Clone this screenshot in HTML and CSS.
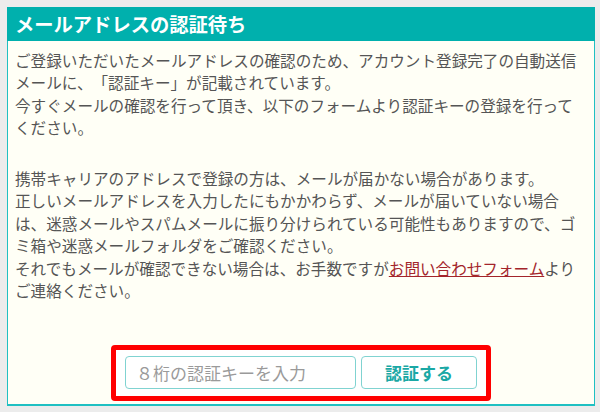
FILE: index.html
```html
<!DOCTYPE html>
<html lang="ja">
<head>
<meta charset="utf-8">
<link rel="stylesheet" href="styles.css">
</head>
<body>
<section class="panel">
  <h1 class="panel-title">メールアドレスの認証待ち</h1>
  <div class="panel-body">
    <p class="msg">ご登録いただいたメールアドレスの確認のため、アカウント登録完了の自動送信メールに、「認証キー」が記載されています。<br>今すぐメールの確認を行って頂き、以下のフォームより認証キーの登録を行ってください。</p>
    <p class="msg">携帯キャリアのアドレスで登録の方は、メールが届かない場合があります。<br>正しいメールアドレスを入力したにもかかわらず、メールが届いていない場合は、迷惑メールやスパムメールに振り分けられている可能性もありますので、ゴミ箱や迷惑メールフォルダをご確認ください。<br>それでもメールが確認できない場合は、お手数ですが<a class="link" href="#">お問い合わせフォーム</a>よりご連絡ください。</p>
    <form class="verify">
      <input class="key-input" type="text" placeholder="８桁の認証キーを入力">
      <button class="verify-btn" type="button">認証する</button>
    </form>
  </div>
</section>
</body>
</html>
```
FILE: styles.css
```css
html, body {
  margin: 0;
  padding: 0;
}
body {
  background: #ececec;
  padding: 7px 0 0 7px;
  font-family: "Noto Sans CJK JP", "Noto Sans", sans-serif;
  text-spacing-trim: space-all;
}
.panel {
  width: 588px;
  box-sizing: border-box;
  border: 1px solid #1fc0c2;
  border-top: none;
  border-bottom-width: 2px;
  background: #fffff6;
}
.panel-title {
  margin: 0 -1px;
  height: 34px;
  background: #00b0ad;
  color: #ffffff;
  font-size: 19.3px;
  font-weight: bold;
  line-height: 34px;
  padding-left: 8px;
}
.panel-body {
  padding: 8px 7px 3px 7px;
}
.msg {
  margin: 0;
  font-size: 15.6px;
  line-height: 22.4px;
  color: #555555;
  text-spacing-trim: space-all;
}
.msg + .msg {
  margin-top: 28.4px;
}
.link {
  color: #a3252b;
  text-decoration: underline;
}
.verify {
  margin: 44px auto 0;
  width: 380px;
  box-sizing: border-box;
  border: 5px solid #ff0000;
  border-radius: 4px;
  background: #ffffff;
  padding: 6px 8px 7px 9px;
  display: flex;
  gap: 5px;
}
.key-input {
  width: 231px;
  height: 33px;
  box-sizing: border-box;
  border: 1.5px solid #80d3d1;
  border-radius: 4px;
  padding: 0 10px;
  font-family: "Noto Sans CJK JP", sans-serif;
  font-size: 17px;
  color: #555;
  background: #fff;
}
.key-input::placeholder {
  color: #9a9a9a;
}
.verify-btn {
  width: 116px;
  height: 33px;
  box-sizing: border-box;
  border: 1.5px solid #80d3d1;
  border-radius: 4px;
  background: #ffffff;
  color: #1aa8a5;
  font-family: "Noto Sans CJK JP", sans-serif;
  font-weight: bold;
  font-size: 17px;
  padding: 0;
}
```
